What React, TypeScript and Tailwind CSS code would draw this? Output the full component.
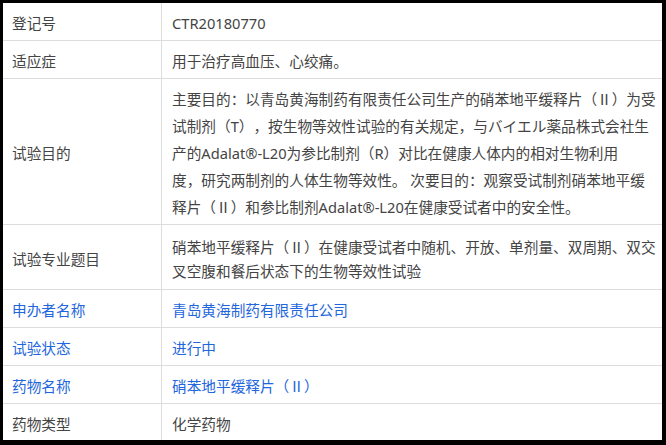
import React from 'react';

type Row = {
  label: string;
  lines: string[];
  h: string;
  lh?: string;
  blue?: boolean;
  last?: boolean;
};

const rows: Row[] = [
  { label: '登记号', lines: ['CTR20180770'], h: 'h-[38px]' },
  { label: '适应症', lines: ['用于治疗高血压、心绞痛。'], h: 'h-[38px]' },
  {
    label: '试验目的',
    h: 'h-[146px]',
    lh: 'leading-[27px]',
    lines: [
      '主要目的：以青岛黄海制药有限责任公司生产的硝苯地平缓释片（Ⅱ）为受',
      '试制剂（T），按生物等效性试验的有关规定，与バイエル薬品株式会社生',
      '产的Adalat®-L20为参比制剂（R）对比在健康人体内的相对生物利用',
      '度，研究两制剂的人体生物等效性。 次要目的：观察受试制剂硝苯地平缓',
      '释片（Ⅱ）和参比制剂Adalat®-L20在健康受试者中的安全性。',
    ],
  },
  {
    label: '试验专业题目',
    h: 'h-[65px]',
    lh: 'leading-[24px]',
    lines: [
      '硝苯地平缓释片（Ⅱ）在健康受试者中随机、开放、单剂量、双周期、双交',
      '叉空腹和餐后状态下的生物等效性试验',
    ],
  },
  { label: '申办者名称', lines: ['青岛黄海制药有限责任公司'], h: 'h-[38px]', blue: true },
  { label: '试验状态', lines: ['进行中'], h: 'h-[38px]', blue: true },
  { label: '药物名称', lines: ['硝苯地平缓释片（Ⅱ）'], h: 'h-[38px]', blue: true },
  { label: '药物类型', lines: ['化学药物'], h: 'h-[36px]', last: true },
];

export default function App() {
  return (
    <div
      className="w-[666px] h-[445px] bg-black pt-[3px] pl-[3px] pr-[4px] pb-[5px] overflow-hidden"
      style={{ fontFamily: '"Noto Sans", "Noto Sans CJK SC", sans-serif' }}
    >
      <div className="bg-white h-full text-[14.67px] text-[#444] [text-spacing-trim:space-all]">
        {rows.map((r) => (
          <div
            key={r.label}
            className={`flex ${r.h} ${r.last ? '' : 'border-b border-[#dddddd]'}`}
          >
            <div
              className={`w-[159px] shrink-0 border-r border-[#dddddd] pl-[9px] pt-[3px] flex items-center ${
                r.blue ? 'text-[#2266dd]' : ''
              }`}
            >
              {r.label}
            </div>
            <div
              className={`flex-1 pl-[10px] pt-[3px] flex flex-col justify-center whitespace-nowrap ${
                r.lh ?? 'leading-[22px]'
              } ${r.blue ? 'text-[#2266dd]' : ''}`}
            >
              {r.lines.map((l, i) => (
                <span key={i} className="block">
                  {l}
                </span>
              ))}
            </div>
          </div>
        ))}
      </div>
    </div>
  );
}
